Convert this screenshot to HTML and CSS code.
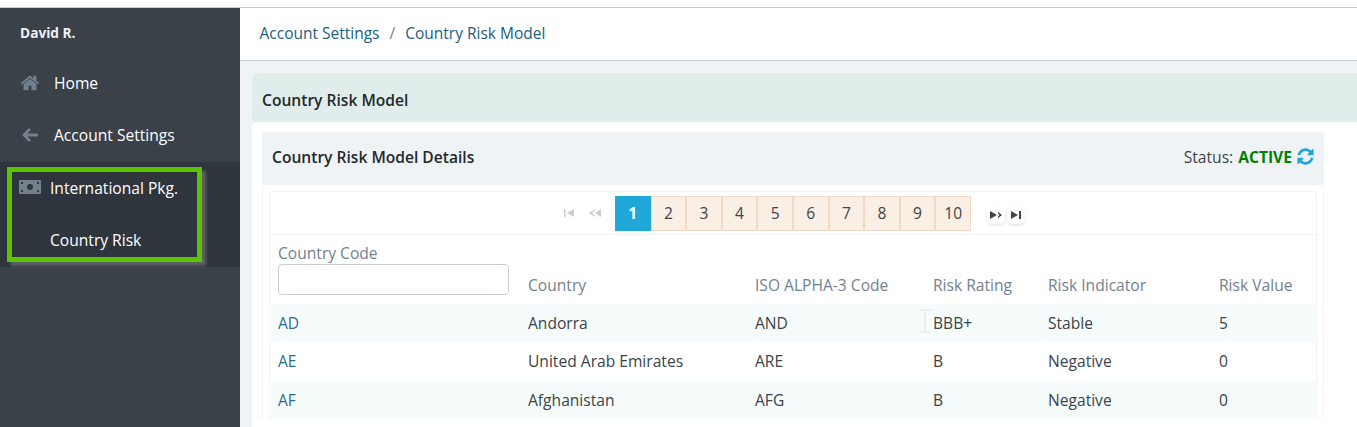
FILE: index.html
```html
<!DOCTYPE html>
<html lang="en">
<head>
<meta charset="utf-8">
<title>Country Risk Model</title>
<link rel="stylesheet" href="styles.css">
</head>
<body>
<div class="app">
  <aside class="sidebar">
    <div class="user">David R.</div>
    <a class="nav-item"><svg class="nav-icon" viewBox="0 0 1792 1792"><path d="M1472 992v480q0 26-19 45t-45 19h-384v-384h-256v384h-384q-26 0-45-19t-19-45v-480q0-1 .5-3t.5-3l575-474 575 474q1 2 1 6zm223-69l-62 74q-8 9-21 11h-3q-13 0-21-7l-692-577-692 577q-12 8-24 7-13-2-21-11l-62-74q-8-10-7-23.5t11-21.5l719-599q32-26 76-26t76 26l244 204v-195q0-14 9-23t23-9h192q14 0 23 9t9 23v408l219 182q10 8 11 21.5t-7 23.5z"/></svg>Home</a>
    <a class="nav-item"><svg class="nav-icon arrow" viewBox="0 0 20 20"><path d="M18 10H4.500M10 4l-6 6 6 6"/></svg>Account Settings</a>
    <div class="nav-group">
      <div class="highlight">
        <a class="sub-item"><svg class="money" viewBox="0 0 22 14"><path fill-rule="evenodd" d="M1 0h20a1 1 0 0 1 1 1v12a1 1 0 0 1-1 1H1a1 1 0 0 1-1-1V1a1 1 0 0 1 1-1zM11 4a3 3 0 1 0 0 6 3 3 0 0 0 0-6zM2 2v2h2V2zM18 2v2h2V2zM2 10v2h2v-2zM18 10v2h2v-2z"/></svg>International Pkg.</a>
        <a class="sub-item sub-plain">Country Risk</a>
      </div>
    </div>
  </aside>
  <main class="main">
    <nav class="breadcrumb"><a>Account Settings</a><span class="sep">/</span><a>Country Risk Model</a></nav>
    <div class="content">
      <h1 class="page-title">Country Risk Model</h1>
      <div class="page-body">
        <section class="card">
          <header class="card-head">
            <h2 class="card-title">Country Risk Model Details</h2>
            <div class="status">Status: <b>ACTIVE</b><svg class="refresh" viewBox="0 0 1792 1792"><path d="M1639 1056q0 5-1 7-64 268-268 434.5t-478 166.5q-146 0-282.5-55t-243.5-157l-129 129q-19 19-45 19t-45-19-19-45v-448q0-26 19-45t45-19h448q26 0 45 19t19 45-19 45l-137 137q71 66 161 102t187 36q134 0 250-65t186-179q11-17 53-117 8-23 30-23h192q13 0 22.5 9.5t9.5 22.5zm25-800v448q0 26-19 45t-45 19h-448q-26 0-45-19t-19-45 19-45l138-138q-148-137-349-137-134 0-250 65t-186 179q-11 17-53 117-8 23-30 23h-199q-13 0-22.5-9.5t-9.5-22.5v-7q65-268 270-434.5t480-166.5q146 0 284 55.5t245 156.5l130-129q19-19 45-19t45 19 19 45z"/></svg></div>
          </header>
          <div class="card-body">
            <div class="grid-box">
              <div class="pager">
                <span class="pg-icon"><svg viewBox="0 0 14 8"><path d="M1 0h1.500v8H1zM4 4l7-4v8z"/></svg></span>
                <span class="pg-icon"><svg viewBox="0 0 14 8"><path d="M1 4l6-4v1.500L4 4l3 2.500V8zM7 4l6-4v8z"/></svg></span>
                <div class="pages">
                  <a class="page on">1</a><a class="page">2</a><a class="page">3</a><a class="page">4</a><a class="page">5</a><a class="page">6</a><a class="page">7</a><a class="page">8</a><a class="page">9</a><a class="page">10</a>
                </div>
                <span class="pg-btn first-btn"><svg viewBox="0 0 14 8"><path d="M1 0l7 4-7 4zM9 1l4 3-4 3V5.500L10.500 4 9 2.500z"/></svg></span>
                <span class="pg-btn"><svg viewBox="0 0 14 8"><path d="M2 0l7 4-7 4zM10 0h2v8h-2z"/></svg></span>
              </div>
              <table class="grid">
                <colgroup><col class="c1"><col class="c2"><col class="c3"><col class="c4"><col class="c5"><col class="c6"></colgroup>
                <thead>
                  <tr>
                    <th class="filter-head"><label class="filter">Country Code<input class="filter-input" type="text"></label></th>
                    <th>Country</th><th>ISO ALPHA-3 Code</th><th>Risk Rating</th><th>Risk Indicator</th><th>Risk Value</th>
                  </tr>
                </thead>
                <tbody>
                  <tr><td class="code">AD</td><td>Andorra</td><td>AND</td><td class="cursor-cell"><svg class="ibeam" viewBox="0 0 14 24"><path d="M1 1h5l1 1 1-1h5M7 2v20M1 23h5l1-1 1 1h5"/></svg>BBB+</td><td>Stable</td><td>5</td></tr>
                  <tr class="tall"><td class="code">AE</td><td>United Arab Emirates</td><td>ARE</td><td>B</td><td>Negative</td><td>0</td></tr>
                  <tr><td class="code">AF</td><td>Afghanistan</td><td>AFG</td><td>B</td><td>Negative</td><td>0</td></tr>
                </tbody>
              </table>
            </div>
          </div>
        </section>
      </div>
    </div>
  </main>
</div>
</body>
</html>
```
FILE: styles.css
```css
* { box-sizing: border-box; }
html, body { margin: 0; height: 427px; overflow: hidden; background: #fff; }
body { font-family: "Open Sans", sans-serif; font-size: 15.600px; color: #23282c; }
.app { display: grid; grid-template-columns: 240px 1fr; height: 420px; margin-top: 7px; border-top: 1px solid #c8ced3; }

.sidebar { background: #3a4149; color: #fff; }
.user { padding: 16px 20px 0; height: 49px; font-size: 13.700px; font-weight: 700; line-height: 18px; color: #eef1f3; }
.nav-item { display: flex; align-items: center; height: 52px; padding-left: 20px; color: #fff; line-height: 22px; }
.nav-icon { width: 20px; height: 20px; margin-right: 14px; fill: #73818f; flex: none; }
.nav-icon.arrow { fill: none; stroke: #73818f; stroke-width: 2.800; }
.nav-group { background: #2f353c; height: 105px; margin-top: 1px; padding: 5px 0 0 7px; }
.highlight { width: 195px; height: 95px; border: 5px solid #5bc400; box-shadow: 4px 4px 3px rgba(130, 135, 140, .55); }
.sub-item { display: flex; align-items: center; height: 32px; color: #fff; padding-left: 7px; }
.sub-item + .sub-item { height: 52px; padding-left: 38px; padding-top: 20px; }
.money { width: 22px; height: 14px; fill: #73818f; margin-right: 9px; flex: none; position: relative; top: -1px; }

.main { background: #fff; min-width: 0; display: flex; flex-direction: column; }
.breadcrumb { height: 53px; flex: none; display: flex; align-items: center; padding: 0 0 2px 19.500px; border-bottom: 1px solid #c8ced3; color: #20607e; font-size: 15.500px; }
.sep { margin: 0 10px; color: #73818f; }
.content { flex: 1; display: flex; flex-direction: column; background: #f0f3f5; padding: 12px 0 0 12px; }
.page-title { margin: 0; height: 49px; flex: none; background: #e0edea; border-radius: 5px 0 0 5px; padding-left: 10px; font-size: 15.600px; font-weight: 600; line-height: 54px; color: #23282c; }
.page-body { flex: 1; background: #fff; border-radius: 5px 0 0 0; padding: 10px 33px 0 10px; }
.card-head { height: 53px; background: #f0f3f5; border-radius: 4px 4px 0 0; display: flex; align-items: center; justify-content: space-between; padding: 0 10px 4px; }
.card-title { margin: 0; font-size: 15.600px; font-weight: 600; color: #23282c; }
.status { display: flex; align-items: center; font-size: 15.600px; color: #3b4349; white-space: pre; }
.status b { color: #008000; font-weight: 700; margin-left: 1px; }
.refresh { width: 19px; height: 19px; fill: #20a8d8; margin: 0 -1px 0 4px; }
.card-body { padding: 6px 6px 0; border-left: 1px solid #f0f3f5; border-right: 1px solid #f0f3f5; }
.grid-box { border: 1px solid #f0f3f5; border-radius: 4px 4px 0 0; border-bottom: 0; }

.pager { height: 43px; border-bottom: 1px solid #f0f3f5; display: flex; align-items: center; padding: 0 0 0 293px; }
.pg-icon { width: 17px; height: 18px; margin-right: 8px; display: flex; align-items: center; }
.pg-icon svg { width: 14px; height: 8px; fill: #c8ced3; }
.pg-icon + .pg-icon { margin-right: 10px; }
.pages { display: flex; }
.page { width: 35.600px; height: 35px; display: flex; align-items: center; justify-content: center; background: #f9efe5; border: 1px solid #f1d9c4; color: #3d444a; }
.page.on { background: #20a8d8; border-color: #20a8d8; color: #fff; font-weight: 700; }
.pg-btn { width: 18px; height: 17px; margin-left: 2px; margin-top: 4px; background: #fff; border-radius: 5px; box-shadow: 0 1px 3px rgba(0, 0, 0, .12); display: flex; align-items: center; justify-content: center; }
.first-btn { margin-left: 16px; }
.pg-btn svg { width: 14px; height: 8px; fill: #3d444a; }

.grid { width: 100%; table-layout: fixed; border-collapse: collapse; font-size: 15.600px; margin-left: -1px; }
.c1 { width: 250px; } .c2 { width: 227px; } .c3 { width: 178px; } .c4 { width: 115px; } .c5 { width: 171px; }
.grid th { font-weight: 400; text-align: left; vertical-align: bottom; padding: 0 9px 9px; color: #73818f; line-height: 20px; height: 69px; }
.grid th.filter-head { padding-bottom: 8px; }
.filter { display: block; line-height: 20px; }
.filter-input { display: block; width: 231px; height: 31px; margin: 1px 0 1px; background: #fff; border: 1px solid #c8ced3; border-radius: 4px; }
.grid td { padding: 0 9px; height: 38px; color: #3b4349; }
.grid .tall td { height: 39px; padding-bottom: 2px; }
.grid td.code { color: #2f6b8a; }
.grid tbody tr:nth-child(odd) td { background: #f6fcfc; }
.cursor-cell { position: relative; }
.ibeam { position: absolute; left: -6px; top: 5px; width: 14px; height: 24px; fill: none; stroke: #e8eaec; stroke-width: 1.300; }
```
